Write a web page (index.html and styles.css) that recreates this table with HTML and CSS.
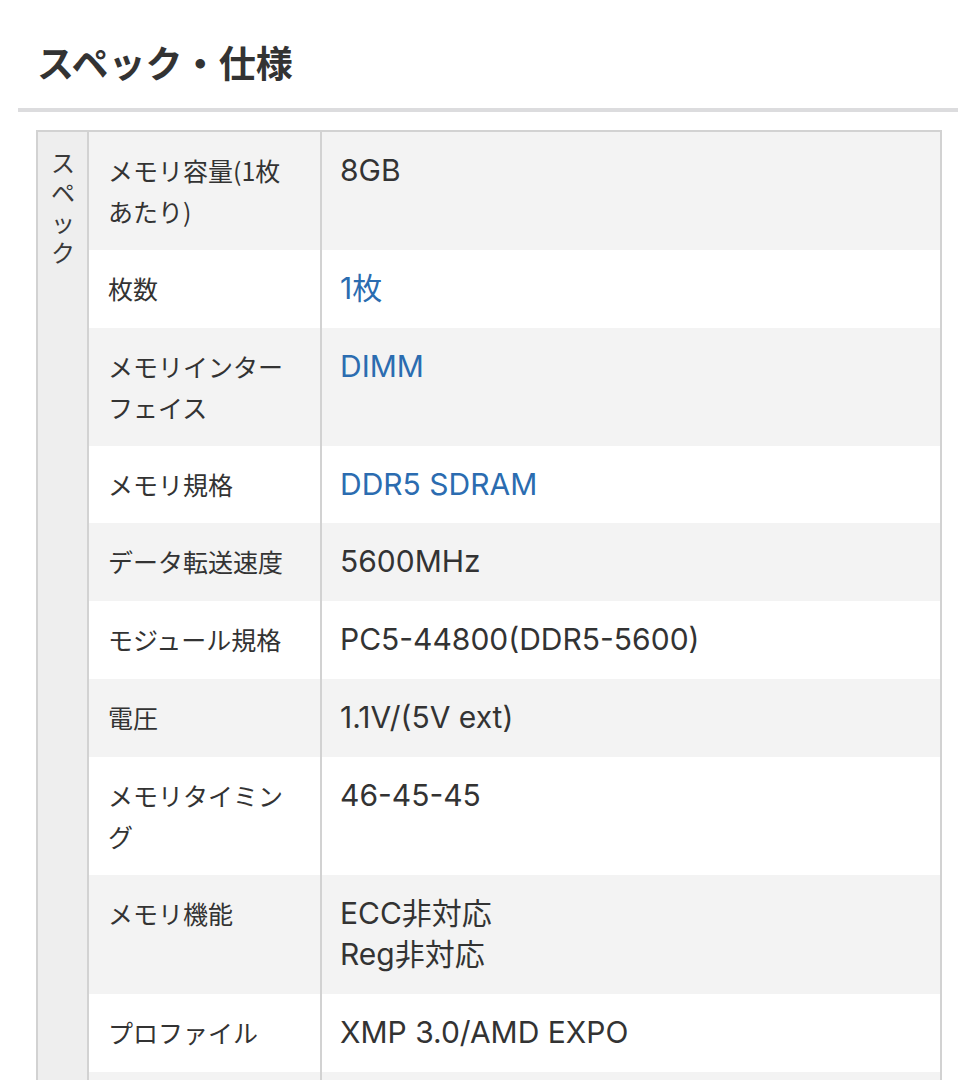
FILE: index.html
```html
<!DOCTYPE html>
<html lang="ja">
<head>
<meta charset="utf-8">
<title>スペック・仕様</title>
<link rel="stylesheet" href="styles.css">
</head>
<body>
<section class="spec">
  <h2 class="spec-title">スペック・仕様</h2>
  <table class="spec-table">
    <colgroup>
      <col class="c-cat">
      <col class="c-label">
      <col class="c-value">
    </colgroup>
    <tbody>
      <tr class="odd">
        <th class="cat" rowspan="11"><span class="cat-text">スペック</span></th>
        <th class="label">メモリ容量(1枚あたり)</th>
        <td class="value">8GB</td>
      </tr>
      <tr>
        <th class="label">枚数</th>
        <td class="value"><a href="#">1枚</a></td>
      </tr>
      <tr class="odd">
        <th class="label">メモリインターフェイス</th>
        <td class="value"><a href="#">DIMM</a></td>
      </tr>
      <tr>
        <th class="label">メモリ規格</th>
        <td class="value"><a href="#">DDR5 SDRAM</a></td>
      </tr>
      <tr class="odd">
        <th class="label">データ転送速度</th>
        <td class="value">5600MHz</td>
      </tr>
      <tr>
        <th class="label">モジュール規格</th>
        <td class="value">PC5-44800(DDR5-5600)</td>
      </tr>
      <tr class="odd">
        <th class="label">電圧</th>
        <td class="value">1.1V/(5V ext)</td>
      </tr>
      <tr>
        <th class="label">メモリタイミング</th>
        <td class="value">46-45-45</td>
      </tr>
      <tr class="odd">
        <th class="label">メモリ機能</th>
        <td class="value">ECC非対応<br>Reg非対応</td>
      </tr>
      <tr>
        <th class="label">プロファイル</th>
        <td class="value">XMP 3.0/AMD EXPO</td>
      </tr>
      <tr class="odd last">
        <th class="label">ヒートシンク</th>
        <td class="value">あり</td>
      </tr>
    </tbody>
  </table>
</section>
</body>
</html>
```

FILE: styles.css
```css
html, body {
  margin: 0;
  padding: 0;
  background: #ffffff;
}

body {
  font-family: "Noto Sans CJK JP", sans-serif;
  color: #333333;
}

.spec {
  padding: 0 20px 0 18px;
}

.spec-title {
  margin: 0;
  padding: 37px 19px 21px;
  font-size: 37px;
  line-height: 50px;
  font-weight: 700;
  color: #333333;
  border-bottom: 4px solid #dcdcde;
}

.spec-table {
  box-sizing: border-box;
  width: 906px;
  margin: 18px 0 0 18px;
  border: 2px solid #d2d2d2;
  border-collapse: separate;
  border-spacing: 0;
  table-layout: fixed;
}

.c-cat { width: 51px; }
.c-label { width: 233px; }

.spec-table th,
.spec-table td {
  box-sizing: border-box;
  vertical-align: top;
  text-align: left;
  font-weight: 400;
}

.spec-table .cat {
  background: #eeeeee;
  border-right: 2px solid #d2d2d2;
  padding: 15px 0 0 1px;
  text-align: center;
}

.cat-text {
  display: inline-block;
  width: 26px;
  font-size: 24px;
  line-height: 30px;
  color: #3a3a3a;
  line-break: anywhere;
  word-break: break-all;
}

.spec-table .label {
  padding: 18px 18px 18px 19px;
  border-right: 2px solid #d2d2d2;
  font-size: 25px;
  line-height: 41px;
  color: #333333;
}

.spec-table .value {
  padding: 18px 18px 18px 18px;
  font-family: "Inter", "Noto Sans CJK JP", sans-serif;
  font-size: 30px;
  line-height: 41.7px;
  color: #333333;
}

.value a {
  color: #2b6cb0;
  text-decoration: none;
}

.spec-table tr.odd th.label,
.spec-table tr.odd td {
  background: #f3f3f3;
}
```
